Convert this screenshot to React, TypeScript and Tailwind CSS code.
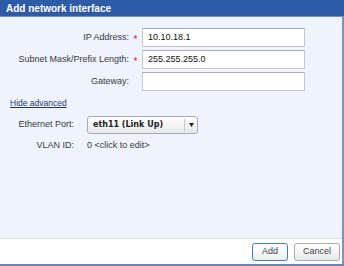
import React from "react";

const font = { fontFamily: '"Liberation Sans", Arial, sans-serif' };

function Row({ label, required, value }: { label: string; required?: boolean; value?: string }) {
  return (
    <div className="flex items-center h-[19px]">
      <div className="w-[129px] text-right text-[9px] text-[#3a3a3a]">{label}</div>
      <div className="w-[13px] text-center text-[#d0344a] text-[11px] leading-none pt-[3px]">{required ? "*" : ""}</div>
      <div className="w-[163px] h-[19px] bg-white border border-[#c3c6cc] border-t-[#a9acb2] flex items-center pl-[5px] text-[9px] text-[#111]">
        {value}
      </div>
    </div>
  );
}

export default function App() {
  return (
    <div className="w-[344px] h-[266px] flex flex-col overflow-hidden" style={font}>
      <div className="h-[16px] bg-[#2d5ba6] flex items-center pl-[6px] text-white font-bold text-[10px]">
        Add network interface
      </div>
      <div className="h-[1px] bg-[#7393c8]" />
      <div className="flex-1 flex">
        <div className="flex-1 flex flex-col bg-[#eef3fd]">
          <div className="flex-1 flex flex-col pt-[11px]">
            <div className="flex flex-col gap-[3px]">
              <Row label="IP Address:" required value="10.10.18.1" />
              <Row label="Subnet Mask/Prefix Length:" required value="255.255.255.0" />
              <Row label="Gateway:" />
            </div>
            <div className="mt-[6px] pl-[10px] text-[8.5px] text-[#1d3a6b] underline leading-[12px]">Hide advanced</div>
            <div className="mt-[7px] flex items-center h-[18px]">
              <div className="w-[74px] text-right text-[9px] text-[#3a3a3a]">Ethernet Port:</div>
              <div className="ml-[13px] w-[111px] h-[18px] rounded-[3px] border border-[#a8abb0] bg-gradient-to-b from-white to-[#e6e7ea] flex items-center">
                <div className="flex-1 pl-[5px] text-[8px] font-bold text-[#222]" style={{ fontFamily: '"DejaVu Sans", Verdana, sans-serif' }}>eth11 (Link Up)</div>
                <div className="w-[1px] h-[12px] bg-[#c4c6ca]" />
                <div className="w-[12px] flex justify-center">
                  <svg width="5" height="4" viewBox="0 0 5 4"><path d="M0 0h5L2.5 4z" fill="#222" /></svg>
                </div>
              </div>
            </div>
            <div className="mt-[5px] flex items-center h-[14px]">
              <div className="w-[74px] text-right text-[9px] text-[#3a3a3a]">VLAN ID:</div>
              <div className="ml-[13px] text-[9px] text-[#3a3a3a]">0 &lt;click to edit&gt;</div>
            </div>
          </div>
          <div className="h-[1px] bg-[#d7dbe3]" />
          <div className="h-[25px] bg-white flex items-center justify-end gap-[6px] pr-[2px]">
            <div className="w-[36px] h-[18px] rounded-[3px] border border-[#3d7fc4] bg-gradient-to-b from-white to-[#eceef0] flex items-center justify-center text-[9px] text-[#444]">Add</div>
            <div className="w-[46px] h-[18px] rounded-[3px] border border-[#a9acb1] bg-gradient-to-b from-white to-[#e6e7ea] flex items-center justify-center text-[9px] text-[#444]">Cancel</div>
          </div>
        </div>
        <div className="w-[2px] bg-[#7d93bb]" />
      </div>
      <div className="h-[2px] bg-[#6a84b3]" />
    </div>
  );
}
